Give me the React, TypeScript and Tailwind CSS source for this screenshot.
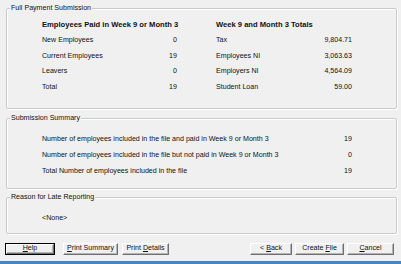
import React from 'react';

type FrameProps = { title: string; className?: string; children?: React.ReactNode };

const Frame: React.FC<FrameProps> = ({ title, className, children }) => (
    <div className={`relative ml-[6px] w-[391px] border border-[#cacaca] rounded-[2px] shadow-[inset_1px_1px_0_#ffffff,1px_1px_0_#ffffff] ${className ?? ''}`}>
        <span className="absolute -top-[5px] left-[3px] bg-[#f0f0f0] px-[1px] leading-[9px]">{title}</span>
        {children}
    </div>
);

const Row: React.FC<{ label: string; value: string }> = ({ label, value }) => (
    <div className="flex h-[15.5px] items-center justify-between whitespace-nowrap">
        <span>{label}</span>
        <span>{value}</span>
    </div>
);

type BtnProps = { children: React.ReactNode; w: string; isDefault?: boolean };

const Btn: React.FC<BtnProps> = ({ children, w, isDefault }) => (
    <div className={`h-[12px] ${w} ${isDefault ? 'border border-black' : ''}`}>
        <div className="flex h-full items-center justify-center whitespace-nowrap border border-t-white border-l-white border-r-[#6f6f6f] border-b-[#6f6f6f] bg-[#f0f0f0] leading-none shadow-[inset_-1px_-1px_0_#b4b4b4]">
            {children}
        </div>
    </div>
);

const App: React.FC = () => {
    return (
        <div className="flex h-[264px] w-[401px] flex-col overflow-hidden bg-[#f0f0f0] text-[7.1px] text-[#111] font-['Liberation_Sans',Arial,sans-serif]">
            {/* Full Payment Submission */}
            <Frame title="Full Payment Submission" className="mt-[8px] h-[101px]">
                <div className="flex pl-[35px] pt-[8px]">
                    <div className="w-[135px]">
                        <div className="flex h-[16px] items-center whitespace-nowrap text-[7.6px] font-bold">Employees Paid in Week 9 or Month 3</div>
                        <Row label="New Employees" value="0" />
                        <Row label="Current Employees" value="19" />
                        <Row label="Leavers" value="0" />
                        <Row label="Total" value="19" />
                    </div>
                    <div className="ml-[39px] w-[136px]">
                        <div className="flex h-[16px] items-center whitespace-nowrap text-[7.6px] font-bold">Week 9 and Month 3 Totals</div>
                        <Row label="Tax" value="9,804.71" />
                        <Row label="Employees NI" value="3,063.63" />
                        <Row label="Employers NI" value="4,564.09" />
                        <Row label="Student Loan" value="59.00" />
                    </div>
                </div>
            </Frame>

            {/* Submission Summary */}
            <Frame title="Submission Summary" className="mt-[9px] h-[71px]">
                <div className="w-[345px] pl-[35px] pt-[12px]">
                    {[
                        ['Number of employees included in the file and paid in Week 9 or Month 3', '19'],
                        ['Number of employees included in the file but not paid in Week 9 or Month 3', '0'],
                        ['Total Number of employees included in the file', '19'],
                    ].map(([label, value]) => (
                        <div key={label} className="flex h-[16px] items-center justify-between whitespace-nowrap">
                            <span>{label}</span>
                            <span>{value}</span>
                        </div>
                    ))}
                </div>
            </Frame>

            {/* Reason for Late Reporting */}
            <Frame title="Reason for Late Reporting" className="mt-[8px] h-[37px]">
                <div className="mt-[12px] flex h-[16px] items-center pl-[35px]">&lt;None&gt;</div>
            </Frame>

            {/* Buttons */}
            <div className="mt-[9px] flex items-center">
                <div className="ml-[5px]">
                    <Btn w="w-[50px]" isDefault>
                        <span><u>H</u>elp</span>
                    </Btn>
                </div>
                <div className="ml-[8px]">
                    <Btn w="w-[55px]">
                        <span><u>P</u>rint Summary</span>
                    </Btn>
                </div>
                <div className="ml-[4px]">
                    <Btn w="w-[47px]">
                        <span>Print <u>D</u>etails</span>
                    </Btn>
                </div>
                <div className="ml-[81px]">
                    <Btn w="w-[42px]">
                        <span>&lt; <u>B</u>ack</span>
                    </Btn>
                </div>
                <div className="ml-[3px]">
                    <Btn w="w-[49px]">
                        <span>Create <u>F</u>ile</span>
                    </Btn>
                </div>
                <div className="ml-[3px]">
                    <Btn w="w-[47px]">
                        <span><u>C</u>ancel</span>
                    </Btn>
                </div>
            </div>

            <div className="mt-auto h-[3px] w-full bg-[#4a84bf]" />
        </div>
    );
};

export default App;
